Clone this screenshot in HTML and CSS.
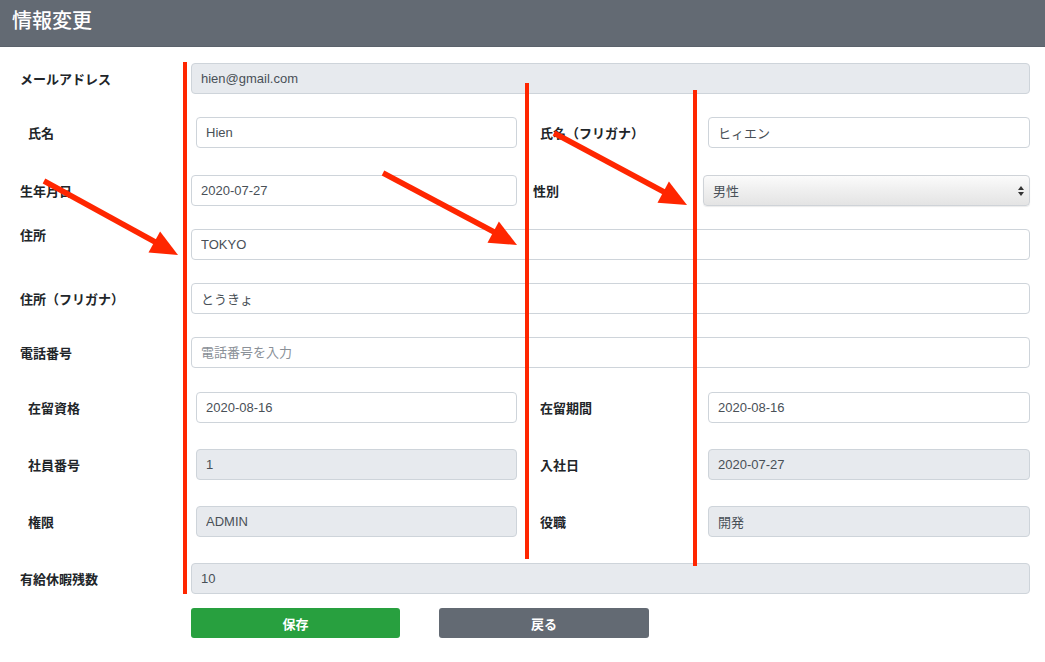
FILE: index.html
```html
<!DOCTYPE html>
<html lang="ja">
<head>
<meta charset="utf-8">
<title>情報変更</title>
<link rel="stylesheet" href="styles.css">
</head>
<body>
<header class="page-header">
  <h1 class="page-title">情報変更</h1>
</header>
<main class="form">
  <div class="row row--full">
    <label class="lbl">メールアドレス</label>
    <input class="field field--ro" value="hien@gmail.com" readonly>
  </div>
  <div class="row row--pair">
    <label class="lbl lbl--a">氏名</label>
    <input class="field field--a" value="Hien">
    <label class="lbl lbl--b">氏名（フリガナ）</label>
    <input class="field field--fill" value="ヒィエン">
  </div>
  <div class="row row--pair-b row--sp4">
    <label class="lbl lbl--wide">生年月日</label>
    <input class="field field--c" value="2020-07-27">
    <label class="lbl lbl--d">性別</label>
    <div class="select-wrap">
      <select class="select"><option>男性</option><option>女性</option></select>
      <svg class="select-arrow" width="8" height="12" viewBox="0 0 8 12"><path d="M4 1 L7 5 H1 Z M4 11 L7 7 H1 Z" fill="#333"/></svg>
    </div>
  </div>
  <div class="row row--full row--top">
    <label class="lbl lbl--top">住所</label>
    <input class="field" value="TOKYO">
  </div>
  <div class="row row--full">
    <label class="lbl">住所（フリガナ）</label>
    <input class="field" value="とうきょ">
  </div>
  <div class="row row--full">
    <label class="lbl">電話番号</label>
    <input class="field" placeholder="電話番号を入力">
  </div>
  <div class="row row--pair row--sp1">
    <label class="lbl lbl--a">在留資格</label>
    <input class="field field--a" value="2020-08-16">
    <label class="lbl lbl--b">在留期間</label>
    <input class="field field--fill" value="2020-08-16">
  </div>
  <div class="row row--pair row--sp3">
    <label class="lbl lbl--a">社員番号</label>
    <input class="field field--a field--ro" value="1" readonly>
    <label class="lbl lbl--b">入社日</label>
    <input class="field field--fill field--ro" value="2020-07-27" readonly>
  </div>
  <div class="row row--pair row--sp3">
    <label class="lbl lbl--a">権限</label>
    <input class="field field--a field--ro" value="ADMIN" readonly>
    <label class="lbl lbl--b">役職</label>
    <input class="field field--fill field--ro" value="開発" readonly>
  </div>
  <div class="row row--full row--sp3">
    <label class="lbl">有給休暇残数</label>
    <input class="field field--ro" value="10" readonly>
  </div>
  <div class="actions">
    <button class="btn btn--save" type="button">保存</button>
    <button class="btn btn--back" type="button">戻る</button>
  </div>
</main>

<svg class="annotations" width="1045" height="662" viewBox="0 0 1045 662">
  <g fill="#ff2600">
    <rect x="183" y="62" width="4" height="532"/>
    <rect x="525" y="83" width="4" height="476"/>
    <rect x="693" y="90" width="4" height="476"/>
    <polygon points="178,255 148.5,252.4 160.1,231.4"/>
    <polygon points="517,245 487.5,242.8 498.9,221.6"/>
    <polygon points="687,205 657.5,202.7 668.9,181.5"/>
  </g>
  <g stroke="#ff2600" stroke-width="5.5" stroke-linecap="butt">
    <line x1="44" y1="181" x2="157" y2="243"/>
    <line x1="383" y1="173" x2="496" y2="233"/>
    <line x1="554" y1="133" x2="666" y2="193"/>
  </g>
</svg>
</body>
</html>
```

FILE: styles.css
```css
* { box-sizing: border-box; }

html, body {
  margin: 0;
  padding: 0;
  background: #ffffff;
}

body {
  position: relative;
  width: 1045px;
  min-height: 662px;
  font-family: "Liberation Sans", "Noto Sans CJK JP", sans-serif;
  color: #212529;
  overflow: hidden;
}

.page-header {
  height: 47px;
  background: #636a73;
  border-bottom: 1px solid #5b626b;
  display: flex;
  align-items: center;
  padding: 0 0 8px 12px;
}

.page-title {
  margin: 0;
  font-family: "Noto Sans CJK JP", sans-serif;
  font-size: 20px;
  font-weight: 500;
  color: #ffffff;
  letter-spacing: 0;
}

.form {
  display: flex;
  flex-direction: column;
  gap: 23px;
  padding-top: 16px;
}

.row {
  display: flex;
  align-items: center;
  height: 31px;
  padding-right: 15px;
}

.row--full { padding-left: 20px; }
.row--pair { padding-left: 28px; }
.row--pair-b { padding-left: 20px; }
.row--sp1 { margin-top: 1px; }
.row--sp3 { margin-top: 3px; }
.row--sp4 { margin-top: 4px; }
.row--top { align-items: flex-start; }

.lbl {
  flex: none;
  width: 171px;
  font-family: "Noto Sans CJK JP", sans-serif;
  font-size: 13px;
  font-weight: 700;
  color: #212529;
  line-height: 16px;
  white-space: nowrap;
}

.lbl--top { margin-top: -2px; }
.lbl--a { width: 168px; }
.lbl--b { width: 168px; margin-left: 23px; }
.lbl--wide { width: 171px; }
.lbl--d { width: 170px; margin-left: 16px; }

.field {
  flex: 1;
  min-width: 0;
  height: 31px;
  padding: 0 9px;
  border: 1px solid #ced4da;
  border-radius: 4px;
  background: #ffffff;
  font-family: "Liberation Sans", "Noto Sans CJK JP", sans-serif;
  font-size: 13px;
  color: #495057;
  outline: none;
}

.field::placeholder { color: #8a9097; }

.field--a { flex: none; width: 321px; }
.field--c { flex: none; width: 326px; }
.field--fill { flex: 1; }

.field--ro {
  background: #e7eaee;
  color: #495057;
}

.select-wrap {
  position: relative;
  flex: 1;
  height: 31px;
}

.select {
  -webkit-appearance: none;
  appearance: none;
  width: 100%;
  height: 31px;
  padding: 0 9px;
  border: 1px solid #cfd3d8;
  border-radius: 4px;
  background: linear-gradient(#fbfbfb 0%, #f0f0f0 45%, #e4e4e4 100%);
  box-shadow: 0 1px 1px rgba(0,0,0,0.08);
  font-family: "Noto Sans CJK JP", sans-serif;
  font-size: 13px;
  color: #495057;
  outline: none;
}

.select-arrow {
  position: absolute;
  right: 5px;
  top: 10px;
  pointer-events: none;
}

.actions {
  display: flex;
  gap: 39px;
  padding-left: 191px;
  margin-top: -9px;
}

.btn {
  height: 30px;
  border: none;
  border-radius: 3px;
  font-family: "Noto Sans CJK JP", sans-serif;
  font-size: 13px;
  font-weight: 700;
  color: #ffffff;
}

.btn--save { width: 209px; background: #28a03f; }
.btn--back { width: 210px; background: #636a73; }

.annotations {
  position: absolute;
  left: 0;
  top: 0;
  pointer-events: none;
}
```
